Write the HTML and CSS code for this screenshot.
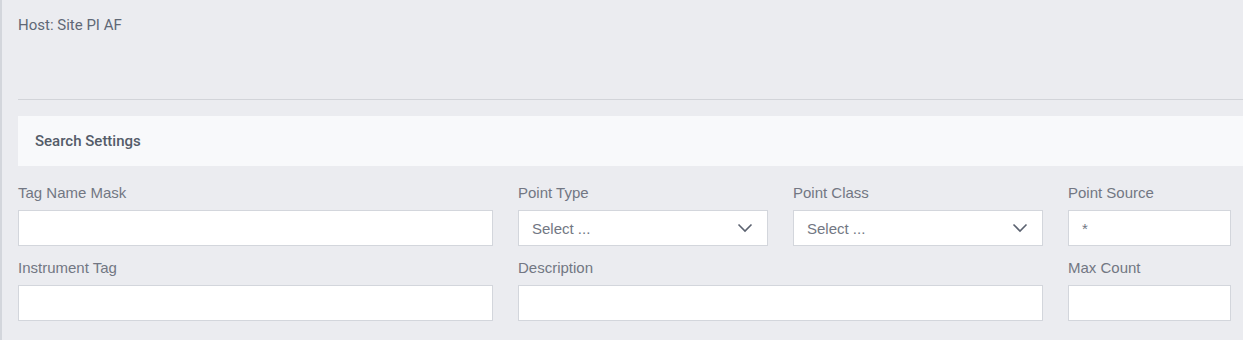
FILE: index.html
```html
<!DOCTYPE html>
<html lang="en">
<head>
  <meta charset="UTF-8">
  <title>Search Settings</title>
  <link rel="stylesheet" href="styles.css">
</head>
<body>
  <div class="page">
    <div class="host">Host: Site PI AF</div>
    <hr class="divider">
    <div class="panel-header">Search Settings</div>

    <div class="form-grid">
      <div class="field">
        <label for="tagMask">Tag Name Mask</label>
        <input type="text" id="tagMask">
      </div>
      <div class="field">
        <label>Point Type</label>
        <div class="select">
          <span>Select ...</span>
          <svg width="16" height="10" viewBox="0 0 16 10"><path d="M1.5 1.5 L8 8 L14.5 1.5" fill="none" stroke="#5b6270" stroke-width="1.6"/></svg>
        </div>
      </div>
      <div class="field">
        <label>Point Class</label>
        <div class="select">
          <span>Select ...</span>
          <svg width="16" height="10" viewBox="0 0 16 10"><path d="M1.5 1.5 L8 8 L14.5 1.5" fill="none" stroke="#5b6270" stroke-width="1.6"/></svg>
        </div>
      </div>
      <div class="field">
        <label for="pointSource">Point Source</label>
        <input type="text" id="pointSource" value="*">
      </div>

      <div class="field">
        <label for="instrumentTag">Instrument Tag</label>
        <input type="text" id="instrumentTag">
      </div>
      <div class="field wide">
        <label for="description">Description</label>
        <input type="text" id="description">
      </div>
      <div class="field">
        <label for="maxCount">Max Count</label>
        <input type="text" id="maxCount">
      </div>
    </div>
  </div>
</body>
</html>
```

FILE: styles.css
```css
body {
  margin: 0;
  background-color: #ebecf0;
  font-family: "Liberation Sans", Arial, sans-serif;
  overflow: hidden;
}
.page {
  border-left: 2px solid #d3d6dc;
  height: 340px;
  padding: 16px 0 0 16px;
  box-sizing: border-box;
}
.host {
  font-family: Roboto, "Liberation Sans", sans-serif;
  font-size: 15px;
  color: #5f6876;
  line-height: 18px;
}
.divider {
  border: none;
  border-top: 1px solid #d2d4d9;
  margin: 65px 0 0 0;
}
.panel-header {
  margin-top: 16px;
  background-color: #f8f9fb;
  height: 50px;
  line-height: 50px;
  padding-left: 17px;
  font-family: Roboto, "Liberation Sans", sans-serif;
  font-weight: 500;
  font-size: 15px;
  color: #545c69;
}
.form-grid {
  display: grid;
  grid-template-columns: 475px 250px 250px 163px;
  column-gap: 25px;
  row-gap: 13px;
  margin-top: 18px;
}
.field label {
  display: block;
  font-size: 15px;
  color: #727783;
  line-height: 18px;
  margin-bottom: 8px;
}
.field.wide {
  grid-column: span 2;
}
.field input,
.select {
  width: 100%;
  height: 36px;
  box-sizing: border-box;
  border: 1px solid #d3d6dc;
  background-color: white;
  font-family: "Liberation Sans", Arial, sans-serif;
  font-size: 15px;
  color: #727783;
  padding: 0 13px;
  margin: 0;
  outline: none;
}
.select {
  display: flex;
  align-items: center;
  justify-content: space-between;
  padding-right: 14px;
}
```
